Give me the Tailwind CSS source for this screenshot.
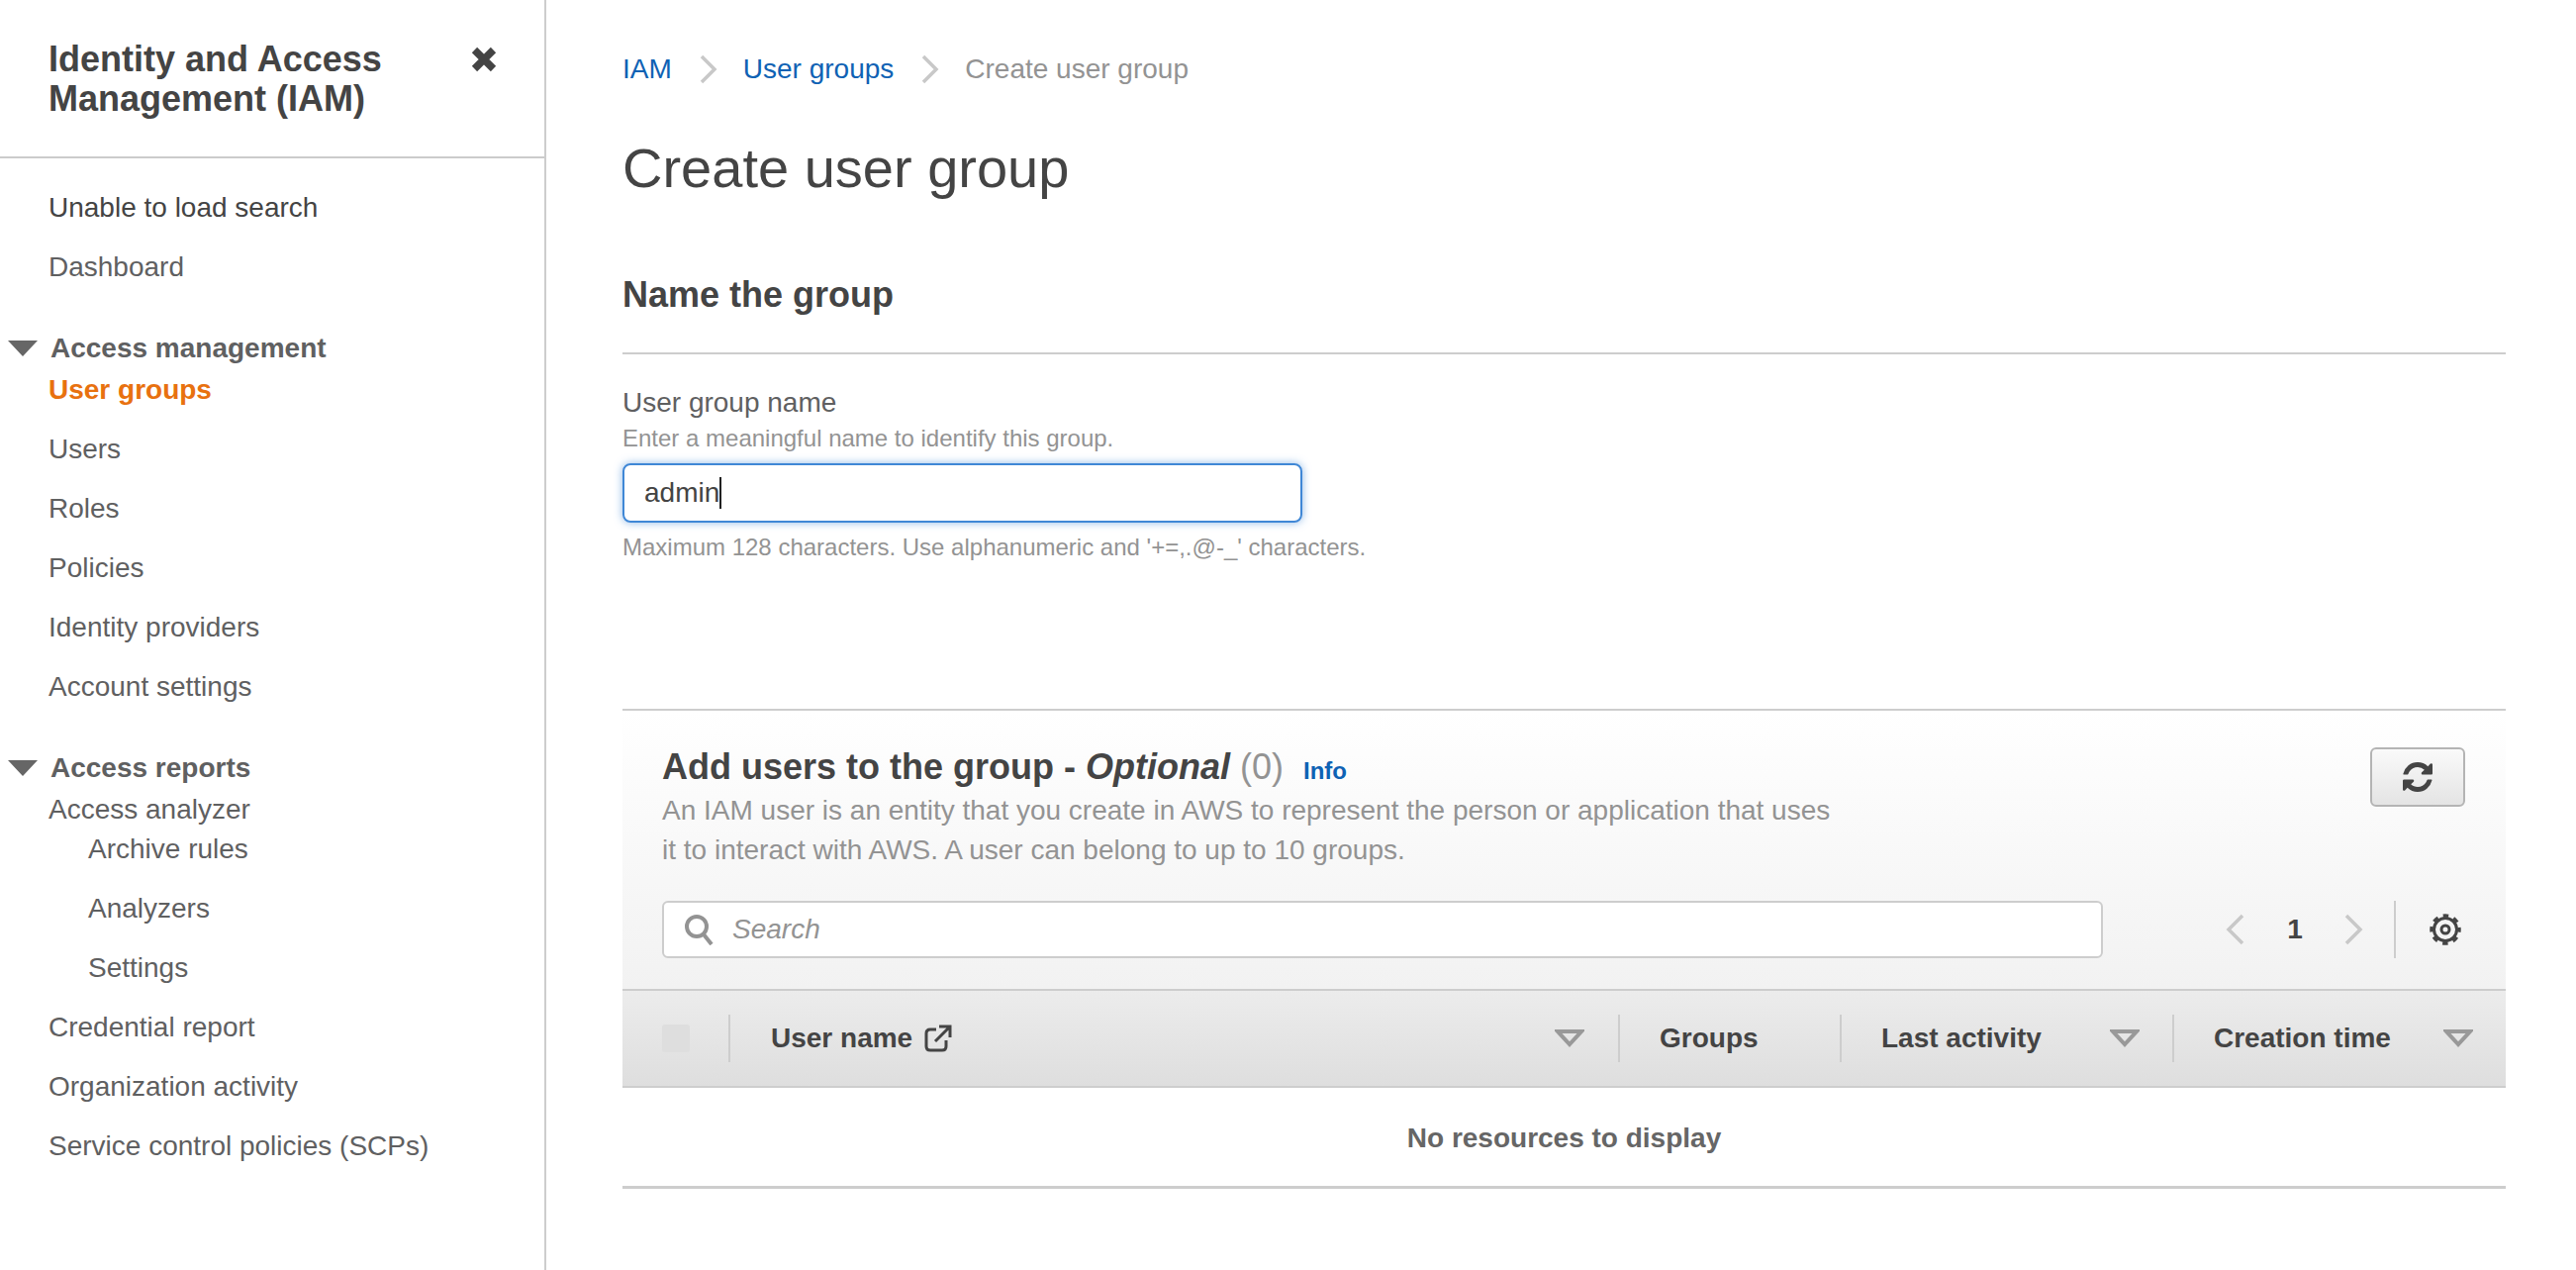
<!DOCTYPE html>
<html lang="en">
<head>
    <meta charset="UTF-8">
    <meta name="viewport" content="width=device-width, initial-scale=1.0">
    <title>Create user group - IAM</title>
    <script src="https://cdn.jsdelivr.net/npm/@tailwindcss/browser@4"></script>
</head>
<body class="bg-white overflow-hidden font-['Liberation_Sans',Arial,sans-serif] text-[28px] text-[#5f6061]">
<div class="flex h-[1283px] w-[2603px]">

    <!-- Sidebar -->
    <aside class="w-[552px] shrink-0 border-r-2 border-[#cdcdcd]">
        <div class="h-[160px] border-b-2 border-[#cbcbcb] pl-[49px] pr-[49px] pt-[40px] flex justify-between">
            <h2 class="text-[36px] leading-[40px] font-bold text-[#444]">Identity and Access<br>Management (IAM)</h2>
            <svg class="w-[26px] h-[26px] mt-[7px] -mr-[1px] text-[#444]" viewBox="0 0 26 26" fill="none" stroke="currentColor" stroke-width="7.5">
                <path d="M3.5 3.5 22.5 22.5M22.5 3.5 3.5 22.5" />
            </svg>
        </div>
        <nav class="pt-[20px]">
            <a class="h-[60px] pl-[49px] flex items-center text-[#444]">Unable to load search</a>
            <a class="h-[60px] pl-[49px] flex items-center">Dashboard</a>

            <div class="h-[42px] mt-[31px] flex items-center font-bold">
                <svg class="w-[30px] h-[18px] ml-[8px] mr-[13px]" viewBox="0 0 30 18"><path d="M0 1H30L15 17Z" fill="#666" /></svg>
                Access management
            </div>
            <a class="h-[42px] pl-[49px] flex items-center font-bold text-[#e8710f]">User groups</a>
            <a class="h-[60px] mt-[9px] pl-[49px] flex items-center">Users</a>
            <a class="h-[60px] pl-[49px] flex items-center">Roles</a>
            <a class="h-[60px] pl-[49px] flex items-center">Policies</a>
            <a class="h-[60px] pl-[49px] flex items-center">Identity providers</a>
            <a class="h-[60px] pl-[49px] flex items-center">Account settings</a>

            <div class="h-[42px] mt-[31px] flex items-center font-bold">
                <svg class="w-[30px] h-[18px] ml-[8px] mr-[13px]" viewBox="0 0 30 18"><path d="M0 1H30L15 17Z" fill="#666" /></svg>
                Access reports
            </div>
            <a class="h-[42px] pl-[49px] flex items-center">Access analyzer</a>
            <div class="-mt-[11px]">
                <a class="h-[60px] pl-[89px] flex items-center">Archive rules</a>
                <a class="h-[60px] pl-[89px] flex items-center">Analyzers</a>
                <a class="h-[60px] pl-[89px] flex items-center">Settings</a>
            </div>
            <a class="h-[60px] pl-[49px] flex items-center">Credential report</a>
            <a class="h-[60px] pl-[49px] flex items-center">Organization activity</a>
            <a class="h-[60px] pl-[49px] flex items-center">Service control policies (SCPs)</a>
        </nav>
    </aside>

    <!-- Main -->
    <main class="w-[1903px] ml-[77px] shrink-0">
        <!-- Breadcrumb -->
        <div class="h-[40px] mt-[50px] flex items-center text-[#0f62b4]">
            <a>IAM</a>
            <svg class="w-[18px] h-[30px] ml-[28px] mr-[26px]" viewBox="0 0 18 30" fill="none" stroke="#c8c8c8" stroke-width="3.5"><path d="M2 2 15 15 2 28" /></svg>
            <a>User groups</a>
            <svg class="w-[18px] h-[30px] ml-[28px] mr-[26px]" viewBox="0 0 18 30" fill="none" stroke="#c8c8c8" stroke-width="3.5"><path d="M2 2 15 15 2 28" /></svg>
            <span class="text-[#939393]">Create user group</span>
        </div>

        <h1 class="text-[56px] leading-[64px] mt-[48px] text-[#444]">Create user group</h1>

        <h2 class="text-[36px] leading-[44px] font-bold mt-[74px] text-[#444]">Name the group</h2>
        <div class="h-[2px] bg-[#cdcdcd] mt-[36px]"></div>

        <!-- Name field -->
        <label class="block leading-[36px] mt-[31px]">User group name</label>
        <p class="text-[24px] leading-[32px] mt-[2px] text-[#939393]">Enter a meaningful name to identify this group.</p>
        <div class="w-[687px] h-[60px] mt-[9px] pl-[20px] border-2 border-[#3f87d6] rounded-[8px] flex items-center text-[#444] shadow-[0_0_8px_rgba(63,135,214,0.6)]">
            admin<span class="w-[2px] h-[32px] bg-[#222]"></span>
        </div>
        <p class="text-[24px] leading-[32px] mt-[9px] text-[#939393]">Maximum 128 characters. Use alphanumeric and '+=,.@-_' characters.</p>

        <!-- Users panel -->
        <section class="mt-[147px] border-t-2 border-[#cdcdcd] bg-linear-to-b from-white to-[#f2f2f2] h-[283px] pl-[40px] pr-[41px] pt-[37px]">
            <div class="flex justify-between">
                <div>
                    <div class="flex items-baseline h-[40px] leading-[40px]">
                        <h2 class="text-[36px] font-bold text-[#444]">Add users to the group - <i>Optional</i> <span class="font-normal text-[#939393]">(0)</span></h2>
                        <a class="text-[24px] font-bold text-[#0f62b4] ml-[20px]">Info</a>
                    </div>
                    <p class="w-[1200px] leading-[40px] mt-[4px] text-[#939393]">An IAM user is an entity that you create in AWS to represent the person or application that uses it to interact with AWS. A user can belong to up to 10 groups.</p>
                </div>
                <button class="w-[96px] h-[60px] flex items-center justify-center border-2 border-[#b4b4b4] rounded-[6px] bg-linear-to-b from-[#fafafa] to-[#e4e4e4]">
                    <svg class="w-[30px] h-[30px]" viewBox="0 0 1536 1536" fill="#444"><path d="M1511 928q0 5-1 7-64 268-268 434.5t-478 166.5q-146 0-282.5-55t-243.5-157l-129 129q-19 19-45 19t-45-19-19-45v-448q0-26 19-45t45-19h448q26 0 45 19t19 45-19 45l-137 137q71 66 161 102t187 36q134 0 250-65t186-179q11-17 53-117 8-23 30-23h192q13 0 22.5 9.5t9.5 22.5zm25-800v448q0 26-19 45t-45 19h-448q-26 0-45-19t-19-45 19-45l138-138q-148-137-349-137-134 0-250 65t-186 179q-11 17-53 117-8 23-30 23h-199q-13 0-22.5-9.5t-9.5-22.5v-7q65-268 270-434.5t480-166.5q146 0 284 55.5t245 156.5l130-129q19-19 45-19t45 19 19 45z" /></svg>
                </button>
            </div>
            <div class="flex items-center mt-[31px]">
                <div class="w-[1456px] h-[58px] bg-white border-2 border-[#cdcdcd] rounded-[6px] flex items-center pl-[20px]">
                    <svg class="w-[30px] h-[32px]" viewBox="0 0 30 32" fill="none" stroke="#939393" stroke-width="4"><circle cx="13" cy="13" r="10" /><path d="M20 21 28 31" /></svg>
                    <span class="italic text-[#939393] ml-[19px]">Search</span>
                </div>
                <svg class="w-[20px] h-[32px] ml-[124px]" viewBox="0 0 20 32" fill="none" stroke="#c8c8c8" stroke-width="3.5"><path d="M17 2 3 16 17 30" /></svg>
                <span class="w-[40px] ml-[30px] text-center font-bold text-[#444]">1</span>
                <svg class="w-[20px] h-[32px] ml-[29px]" viewBox="0 0 20 32" fill="none" stroke="#c8c8c8" stroke-width="3.5"><path d="M3 2 17 16 3 30" /></svg>
                <div class="w-[2px] h-[58px] bg-[#cdcdcd] ml-[31px]"></div>
                <svg class="w-[34px] h-[34px] ml-[33px]" viewBox="0 0 34 34" fill="none" stroke="#444">
                    <circle cx="17" cy="17" r="11.5" stroke-width="3" />
                    <circle cx="17" cy="17" r="4" stroke-width="3" />
                    <circle cx="17" cy="17" r="14" stroke-width="3.5" stroke-dasharray="5.5 5.5" stroke-dashoffset="2.75" />
                </svg>
            </div>
        </section>

        <!-- Table header -->
        <div class="h-[100px] border-y-2 border-[#cdcdcd] bg-linear-to-b from-[#ececec] to-[#dedede] flex items-center font-bold text-[#444]">
            <div class="w-[109px] h-[48px] border-r-2 border-[#cdcdcd] pl-[40px] flex items-center">
                <span class="w-[28px] h-[28px] rounded-[3px] bg-[#dedede]"></span>
            </div>
            <div class="w-[899px] h-[48px] border-r-2 border-[#cdcdcd] pl-[41px] pr-[34px] flex items-center">
                User name
                <svg class="w-[28px] h-[28px] ml-[12px]" viewBox="0 0 28 28" fill="none" stroke="#444" stroke-width="3"><path d="M12 5H6Q2 5 2 9V22Q2 26 6 26H18Q22 26 22 22V16" /><path d="M11 17 26 2M15 2H26V13" /></svg>
                <svg class="w-[30px] h-[20px] ml-auto" viewBox="0 0 30 20" fill="none" stroke="#999" stroke-width="4"><path d="M3 3H27L15 16Z" /></svg>
            </div>
            <div class="w-[224px] h-[48px] border-r-2 border-[#cdcdcd] pl-[40px] flex items-center">Groups</div>
            <div class="w-[336px] h-[48px] border-r-2 border-[#cdcdcd] pl-[40px] pr-[33px] flex items-center">
                Last activity
                <svg class="w-[30px] h-[20px] ml-auto" viewBox="0 0 30 20" fill="none" stroke="#999" stroke-width="4"><path d="M3 3H27L15 16Z" /></svg>
            </div>
            <div class="flex-1 h-[48px] pl-[40px] pr-[33px] flex items-center">
                Creation time
                <svg class="w-[30px] h-[20px] ml-auto" viewBox="0 0 30 20" fill="none" stroke="#999" stroke-width="4"><path d="M3 3H27L15 16Z" /></svg>
            </div>
        </div>

        <!-- Empty state -->
        <div class="h-[102px] pt-[2px] border-b-[3px] border-[#cdcdcd] flex items-center justify-center font-bold text-[#666]">No resources to display</div>
    </main>
</div>
</body>
</html>
